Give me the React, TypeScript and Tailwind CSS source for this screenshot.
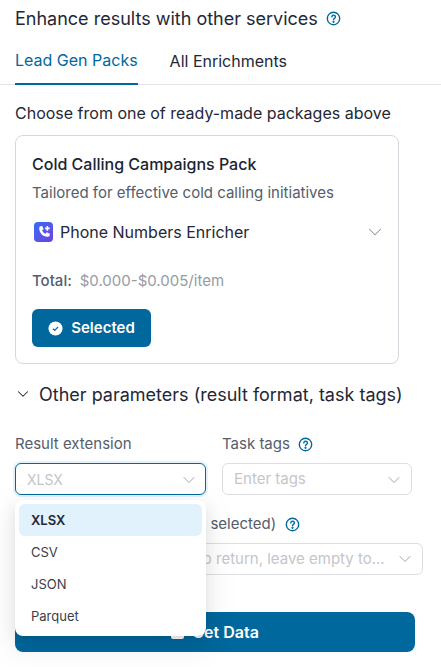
import React from "react";
import { ChevronDown } from "lucide-react";

const Help = ({ size = 15 }: { size?: number }) => (
  <svg width={size} height={size} viewBox="0 0 16 16" fill="none" stroke="#00689c" strokeWidth="1.5" strokeLinecap="round">
    <circle cx="8" cy="8" r="6.6" />
    <path d="M6.2 6.3a1.9 1.9 0 1 1 2.9 1.6c-.7.4-1.1.8-1.1 1.5" />
    <circle cx="8" cy="11.5" r=".45" fill="#00689c" />
  </svg>
);

export default function App() {
  return (
    <div className="relative h-[667px] w-[441px] overflow-hidden bg-white font-['Inter',sans-serif] text-[#1a2433]">
      <div className="flex h-[36px] items-center gap-[8px] pl-[15px] text-[18px] text-[#242736]">
        <span>Enhance results with other services</span>
        <Help />
      </div>
      <div className="mt-[6px] flex h-[43px] gap-[32px] border-b border-[#e3e4e8] pl-[15px] text-[16px]">
        <div className="flex h-[43px] items-center border-b-2 border-[#00689c] pb-[5px] text-[#00689c]">Lead Gen Packs</div>
        <div className="flex h-[43px] items-center pb-[5px] text-[#242736]">All Enrichments</div>
      </div>
      <div className="mt-[17px] pl-[15px] text-[16px] leading-[22px] text-[#242736]">Choose from one of ready-made packages above</div>
      <div className="ml-[15px] mt-[11px] flex h-[229px] w-[384px] flex-col rounded-[8px] border border-[#d5d7dc] pl-[16px] pr-[16px]">
        <div className="mt-[17px] text-[16px] font-medium leading-[22px] text-[#1a2433]">Cold Calling Campaigns Pack</div>
        <div className="mt-[8px] text-[15px] leading-[20px] text-[#555d6b]">Tailored for effective cold calling initiatives</div>
        <div className="mt-[17px] flex h-[24px] items-center">
          <div className="ml-[2px] flex h-[20px] w-[19px] items-center justify-center rounded-[4px] bg-gradient-to-br from-[#2a6ef5] to-[#6a3de0]">
            <svg width="16" height="16" viewBox="0 0 24 24" fill="white">
              <path d="M6.6 3.500 9.400 3l2 4.800-2.300 1.900c1 2.200 2.900 4.100 5.100 5.100l1.900-2.300 4.800 2-.5 2.800c-.2 1.100-1.200 1.900-2.300 1.800C10.300 19.500 4.500 13.700 4.900 5.800c.1-1.100.7-2.100 1.700-2.300Z" />
              <path d="M17 3v7M13.500 6.500h7" stroke="white" strokeWidth="2.400" />
            </svg>
          </div>
          <span className="ml-[7px] text-[16px] text-[#242736]">Phone Numbers Enricher</span>
          <ChevronDown className="-mr-[4px] ml-auto text-[#8d9199]" size={22} strokeWidth={1.1} />
        </div>
        <div className="mt-[26px] flex h-[22px] items-center text-[15px]">
          <span className="font-medium text-[#555d6b]">Total:</span>
          <span className="ml-[8px] text-[#969ba3]">$0.000-$0.005/item</span>
        </div>
        <button className="mt-[17px] flex h-[38px] w-[119px] items-center justify-center gap-[8px] rounded-[6px] bg-[#00689c] text-[15px] font-semibold text-white">
          <svg width="15" height="15" viewBox="0 0 16 16">
            <circle cx="8" cy="8" r="7.500" fill="white" />
            <path d="M5.300 8.200 7.200 10l3.500-3.700" fill="none" stroke="#00689c" strokeWidth="1.300" />
          </svg>
          Selected
        </button>
      </div>
      <div className="ml-[15px] mt-[18px] flex h-[24px] items-center text-[18px] text-[#242736]">
        <ChevronDown size={18} strokeWidth={1.4} className="-ml-[1px] text-[#242736]" />
        <span className="ml-[7px]">Other parameters (result format, task tags)</span>
      </div>
      <div className="ml-[15px] mt-[27px] flex gap-[16px]">
        <div className="w-[191px]">
          <div className="h-[22px] text-[15px] leading-[22px] text-[#555d6b]">Result extension</div>
          <div className="mt-[8px] flex h-[32px] items-center justify-between rounded-[6px] border border-[#00689c] px-[11px] pt-[1px] text-[14px] text-[#c4c6cb] shadow-[0_0_0_2px_#e2f2fc]">
            <span>XLSX</span>
            <ChevronDown size={20} strokeWidth={1.2} className="-mr-[5px] text-[#a3a6ad]" />
          </div>
        </div>
        <div className="w-[190px]">
          <div className="flex h-[22px] items-center gap-[8px] text-[15px] text-[#555d6b]">
            <span>Task tags</span>
            <Help />
          </div>
          <div className="mt-[8px] flex h-[32px] items-center justify-between rounded-[6px] border border-[#dcdee2] px-[11px] pt-[1px] text-[15px] text-[#c4c6cb]">
            <span>Enter tags</span>
            <ChevronDown size={20} strokeWidth={1.2} className="-mr-[4px] text-[#a3a6ad]" />
          </div>
        </div>
      </div>
      <div className="ml-[15px] mt-[18px] flex h-[22px] w-[408px] items-center pl-[6px] text-[15px] text-[#555d6b]">
        <span>Output list (return all if not selected)</span>
        <span className="ml-[9px]"><Help /></span>
      </div>
      <div className="ml-[15px] mt-[8px] flex h-[32px] w-[408px] items-center justify-between rounded-[6px] border border-[#dcdee2] pl-[14px] pr-[11px] text-[15px] text-[#c4c6cb]">
        <span className="whitespace-nowrap">Select the output fields to return, leave empty to...</span>
        <ChevronDown size={20} strokeWidth={1.2} className="-mr-[4px] text-[#a3a6ad]" />
      </div>
      <button className="ml-[15px] mt-[37px] flex h-[40px] w-[400px] items-center justify-center gap-[8px] rounded-[8px] bg-[#00689c] text-[16px] font-semibold text-white">
        <span className="h-[13px] w-[13px] rounded-[2px] bg-white" />
        Get Data
      </button>
      <div className="absolute left-[15px] top-[500px] h-[136px] w-[191px] rounded-[8px] bg-white p-[4px] text-[13px] text-[#3a3f4b] shadow-[0_6px_16px_rgba(0,0,0,0.08),0_3px_6px_-4px_rgba(0,0,0,0.12),0_9px_28px_8px_rgba(0,0,0,0.05)]">
        <div className="flex h-[32px] items-center rounded-[6px] bg-[#e2f2fc] px-[12px] pt-[1px] font-semibold text-[#242736]">XLSX</div>
        <div className="flex h-[32px] items-center px-[12px] pt-[1px]">CSV</div>
        <div className="flex h-[32px] items-center px-[12px] pt-[1px]">JSON</div>
        <div className="flex h-[32px] items-center px-[12px] pt-[1px]">Parquet</div>
      </div>
    </div>
  );
}
